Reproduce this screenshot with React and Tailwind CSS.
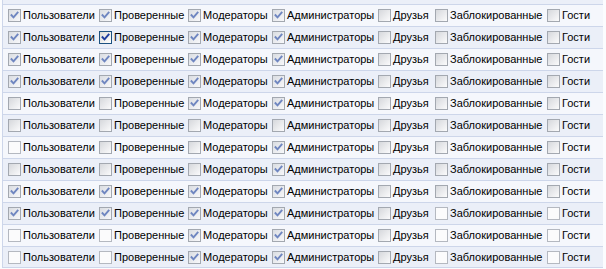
import React from "react";

const LABELS = [
  { t: "Пользователи", w: "w-[71px]" },
  { t: "Проверенные", w: "w-[69px]" },
  { t: "Модераторы", w: "w-[64px]" },
  { t: "Администраторы", w: "w-[86px]" },
  { t: "Друзья", w: "w-[37px]" },
  { t: "Заблокированные", w: "w-[92px]" },
  { t: "Гости", w: "w-[28px]" },
];

// c = checked (muted), a = checked (active), g = unchecked gradient, p = unchecked plain
const ROWS = [
  "ccccggg",
  "caccggg",
  "ccccggg",
  "ccccggg",
  "ggccggg",
  "ggggggg",
  "pggcggg",
  "gggcggg",
  "ccccggg",
  "ccccgpp",
  "ppccgpp",
  "ppccgpp",
];

function Check({ color }) {
  return (
    <svg width="11" height="11" viewBox="0 0 11 11" className="block">
      <path
        d="M2.5 5.2 L4.5 7.4 L8.6 2.6"
        fill="none"
        stroke={color}
        strokeWidth="1.9"
        strokeLinecap="square"
      />
    </svg>
  );
}

function Box({ s }) {
  if (s === "a") {
    return (
      <span className="flex h-[13px] w-[13px] shrink-0 items-center justify-center border border-[#1c5180] bg-gradient-to-br from-[#dcdcd8] to-[#ffffff]">
        <Check color="#1f3e9e" />
      </span>
    );
  }
  if (s === "c") {
    return (
      <span className="flex h-[13px] w-[13px] shrink-0 items-center justify-center border border-[#a3a8b0] bg-gradient-to-br from-[#dadde2] to-[#f8f8fa]">
        <Check color="#6f86c0" />
      </span>
    );
  }
  if (s === "g") {
    return (
      <span className="block h-[13px] w-[13px] shrink-0 border border-[#a3a8b0] bg-gradient-to-br from-[#d6d8dc] to-[#fbfbfc]" />
    );
  }
  return (
    <span className="block h-[13px] w-[13px] shrink-0 border border-[#b4b8c0] bg-[#fbfbfc]" />
  );
}

export default function App() {
  return (
    <div
      className="h-[269px] w-[606px] overflow-hidden bg-[#fbfcfe] text-[11px] text-black"
      style={{ fontFamily: '"Liberation Sans", Arial, sans-serif' }}
    >
      <div className="ml-[2px] w-[601px] border-l border-[#cdd6ea]">
        <div className="h-[4px] bg-[#ebeff8]" />
        {ROWS.map((row, i) => (
          <div
            key={i}
            className={`flex h-[22px] items-center gap-[5px] border-t border-[#cdd6ea] pl-[5px] ${
              i % 2 === 0 ? "bg-[#f5f7fc]" : "bg-[#ebeff8]"
            } ${i === ROWS.length - 1 ? "border-b" : ""}`}
          >
            {LABELS.map((label, j) => (
              <label key={j} className="flex items-center gap-[2px] leading-none">
                <Box s={row[j]} />
                <span className={`whitespace-nowrap ${label.w}`}>{label.t}</span>
              </label>
            ))}
          </div>
        ))}
      </div>
    </div>
  );
}
